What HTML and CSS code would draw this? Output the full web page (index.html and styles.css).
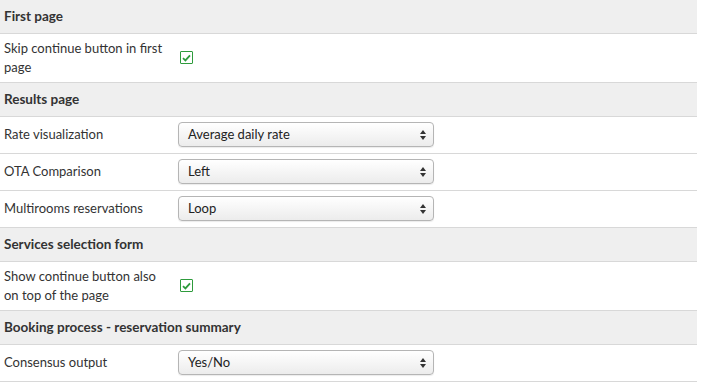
FILE: index.html
```html
<!DOCTYPE html>
<html lang="en">
<head>
    <meta charset="UTF-8">
    <meta name="viewport" content="width=device-width, initial-scale=1.0">
    <link rel="stylesheet" href="styles.css">
</head>
<body>
    <table class="settings">
        <tr class="section"><td colspan="2">First page</td></tr>
        <tr class="tall">
            <td class="label">Skip continue button in first page</td>
            <td class="field"><span class="check"><svg width="9" height="8" viewBox="0 0 9 8"><path d="M1 4.2 L3.4 6.4 L8 1.4" fill="none" stroke="#2e9b3c" stroke-width="1.8"/></svg></span></td>
        </tr>
        <tr class="section"><td colspan="2">Results page</td></tr>
        <tr>
            <td class="label">Rate visualization</td>
            <td class="field"><div class="select">Average daily rate<span class="arrows"></span></div></td>
        </tr>
        <tr>
            <td class="label">OTA Comparison</td>
            <td class="field"><div class="select">Left<span class="arrows"></span></div></td>
        </tr>
        <tr>
            <td class="label">Multirooms reservations</td>
            <td class="field"><div class="select">Loop<span class="arrows"></span></div></td>
        </tr>
        <tr class="section"><td colspan="2">Services selection form</td></tr>
        <tr class="tall">
            <td class="label">Show continue button also on top of the page</td>
            <td class="field"><span class="check"><svg width="9" height="8" viewBox="0 0 9 8"><path d="M1 4.2 L3.4 6.4 L8 1.4" fill="none" stroke="#2e9b3c" stroke-width="1.8"/></svg></span></td>
        </tr>
        <tr class="section"><td colspan="2">Booking process - reservation summary</td></tr>
        <tr>
            <td class="label">Consensus output</td>
            <td class="field"><div class="select">Yes/No<span class="arrows"></span></div></td>
        </tr>
    </table>
</body>
</html>
```
FILE: styles.css
```css
body {
    margin: 0;
    font-family: Lato, sans-serif;
    font-size: 13px;
    color: #333;
    background-color: #fff;
}

.settings {
    width: 697px;
    border-collapse: collapse;
}

.settings td {
    border-bottom: 1px solid #d8d8d8;
    padding: 0;
    vertical-align: middle;
}

.settings tr {
    height: 37px;
}

.settings tr.section {
    height: 34px;
}

.settings tr.section:first-child {
    height: 33px;
}

.settings tr.tall {
    height: 49px;
}

.section td {
    padding-left: 4px;
    background-color: #efefef;
    font-size: 13.5px;
    font-weight: bold;
}

.settings td.label {
    width: 164px;
    padding: 0 8px 0 4px;
    line-height: 19px;
}

.check {
    display: flex;
    align-items: center;
    justify-content: center;
    width: 11px;
    height: 11px;
    margin-left: 4px;
    border: 1.5px solid #2e9b3c;
    border-radius: 1px;
}

.select {
    position: relative;
    box-sizing: border-box;
    width: 256px;
    height: 25px;
    margin-left: 2px;
    padding-left: 9px;
    line-height: 23px;
    border: 1px solid #b5b5b5;
    border-radius: 4px;
    background: linear-gradient(#ffffff, #ececec);
    box-shadow: 0 1px 1px rgba(0, 0, 0, 0.08);
    color: #222;
}

.arrows {
    position: absolute;
    right: 7px;
    top: 7px;
    width: 6px;
    height: 10px;
}

.arrows::before,
.arrows::after {
    content: "";
    position: absolute;
    left: 0;
    border-left: 3px solid transparent;
    border-right: 3px solid transparent;
}

.arrows::before {
    top: 0;
    border-bottom: 4px solid #333;
}

.arrows::after {
    bottom: 0;
    border-top: 4px solid #333;
}
```
